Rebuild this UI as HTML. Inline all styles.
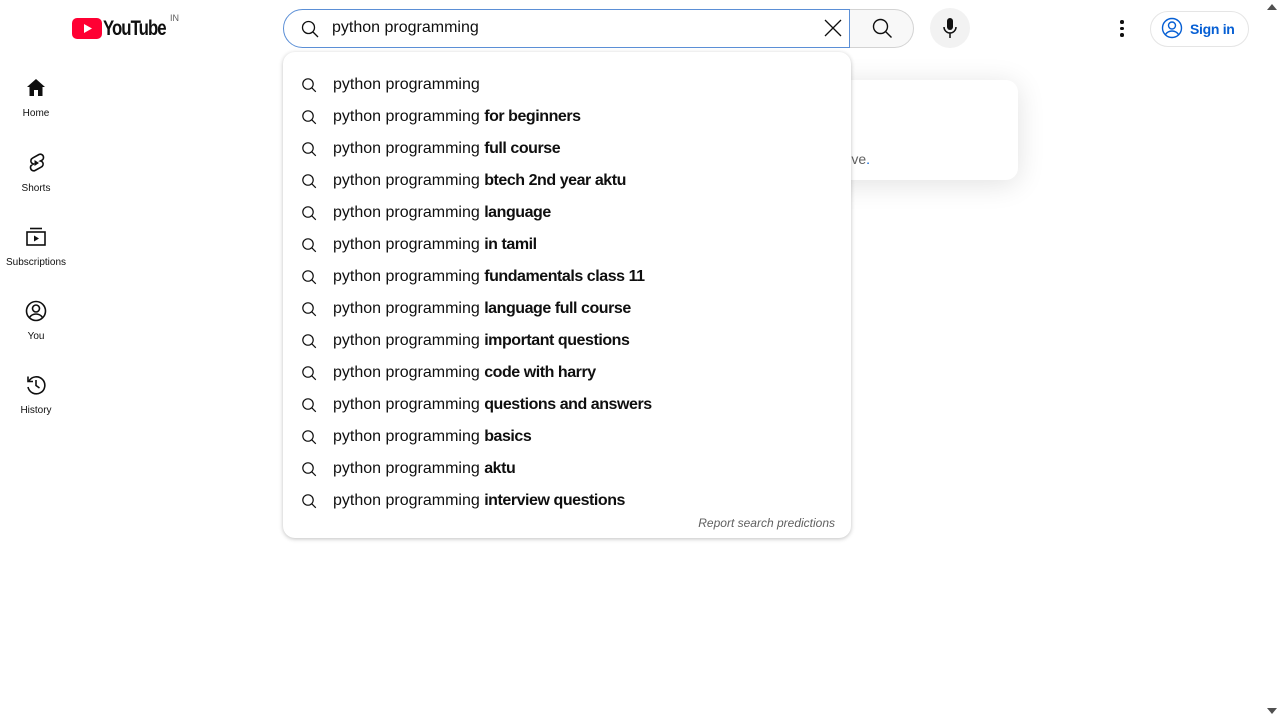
<!DOCTYPE html>
<html><head><style>
body{margin:0;width:1280px;height:720px;overflow:hidden;background:#fff;font-family:"Liberation Sans",Roboto,sans-serif;position:relative;color:#0f0f0f}
.abs{position:absolute}
.nav{position:absolute;left:0;width:72px;text-align:center;font-size:10px;color:#0f0f0f}
.nav svg{display:block;margin:0 auto 8px}
.row{position:absolute;left:0;height:32px;line-height:32px;font-size:16px;width:568px}
.row svg{position:absolute;left:18px;top:8px}
.row span{position:absolute;left:50px}
b{font-weight:bold;letter-spacing:-0.45px}
</style></head><body>
<div class="abs" style="left:72px;top:18px">
<svg width="30" height="21" viewBox="0 0 30 21"><rect width="30" height="21" rx="5" fill="#ff0033"/><path d="M12 6v9l8-4.5z" fill="#fff"/></svg></div>
<div class="abs" style="left:103px;top:17px;font-size:21px;font-weight:bold;letter-spacing:-1.2px;transform:scaleX(0.8);transform-origin:left">YouTube</div>
<div class="abs" style="left:170px;top:13px;font-size:9px;color:#606060">IN</div>
<div class="abs" style="left:283px;top:9px;width:565px;height:37px;border:1px solid #5b8fd6;border-radius:20px 0 0 20px"></div>
<svg class="abs" style="left:300px;top:19px" width="20" height="20" viewBox="0 0 20 20" fill="none" stroke="#0f0f0f" stroke-width="1.3"><circle cx="8.5" cy="8.5" r="6"/><path d="M13 13l5 5"/></svg>
<div class="abs" style="left:332px;top:19px;font-size:16px">python programming</div>
<svg class="abs" style="left:823px;top:18px" width="20" height="20" viewBox="0 0 20 20" stroke="#0f0f0f" stroke-width="1.3"><path d="M2 2l16 16M18 2L2 18"/></svg>
<div class="abs" style="left:850px;top:9px;width:63px;height:37px;background:#f8f8f8;border:1px solid #d3d3d3;border-left:none;border-radius:0 20px 20px 0"></div>
<svg class="abs" style="left:871px;top:17px" width="22" height="22" viewBox="0 0 22 22" fill="none" stroke="#0f0f0f" stroke-width="1.4"><circle cx="9.5" cy="9.5" r="7"/><path d="M14.5 14.5l6 6"/></svg>
<div class="abs" style="left:930px;top:8px;width:40px;height:40px;border-radius:50%;background:#f2f2f2"></div>
<svg class="abs" style="left:940px;top:17px" width="20" height="22" viewBox="0 0 20 22"><rect x="7" y="1" width="6" height="12" rx="3" fill="#0f0f0f"/><path d="M4 10a6 6 0 0 0 12 0M10 16v5" stroke="#0f0f0f" stroke-width="1.5" fill="none"/></svg>
<div class="abs" style="left:1120px;top:20px;width:4px">
<div style="width:3.5px;height:3.5px;border-radius:50%;background:#0f0f0f;margin-bottom:3px"></div><div style="width:3.5px;height:3.5px;border-radius:50%;background:#0f0f0f;margin-bottom:3px"></div><div style="width:3.5px;height:3.5px;border-radius:50%;background:#0f0f0f"></div></div>
<div class="abs" style="left:1150px;top:11px;width:97px;height:34px;border:1px solid #e5e5e5;border-radius:18px"></div>
<svg class="abs" style="left:1161px;top:17px" width="22" height="22" viewBox="0 0 22 22" fill="none" stroke="#065fd4" stroke-width="1.4"><circle cx="11" cy="11" r="9.5"/><circle cx="11" cy="8.5" r="3.5"/><path d="M4.5 17.5c2-3 4-3.5 6.5-3.5s4.5.5 6.5 3.5"/></svg>
<div class="abs" style="left:1190px;top:21px;font-size:14px;font-weight:bold;letter-spacing:-0.3px;color:#065fd4">Sign in</div>
<div class="abs" style="left:1267px;top:4px;width:0;height:0;border-left:5px solid transparent;border-right:5px solid transparent;border-bottom:6px solid #505050"></div>
<div class="abs" style="left:1267px;top:708px;width:0;height:0;border-left:5px solid transparent;border-right:5px solid transparent;border-top:6px solid #505050"></div>
<div class="nav" style="top:76px"><svg width="24" height="24" viewBox="0 0 24 24"><path d="M12 3l9 8h-2.5v9h-4.5v-6h-4v6H5.5v-9H3z" fill="#0f0f0f"/></svg>Home</div>
<div class="nav" style="top:151px"><svg width="24" height="24" viewBox="0 0 24 24" fill="none" stroke="#0f0f0f" stroke-width="1.6"><path d="M15 3.5c2-1 4.5.5 4.5 3 0 1.5-1 2.5-2 3l-1 .5c2 .5 3 2 2.5 4-.3 1-1 1.7-2 2.2L11 19.5c-2 1-4.5-.5-4.5-3 0-1.5 1-2.5 2-3l1-.5c-2-.5-3-2-2.5-4 .3-1 1-1.7 2-2.2z"/><path d="M10.5 9v6l4.5-3z" fill="#0f0f0f" stroke="none"/></svg>Shorts</div>
<div class="nav" style="top:225px"><svg width="24" height="24" viewBox="0 0 24 24" fill="none" stroke="#0f0f0f" stroke-width="1.6"><path d="M6 3.5h12"/><rect x="3" y="7" width="18" height="13"/><path d="M10 10.5v6l5-3z" fill="#0f0f0f" stroke="none"/></svg>Subscriptions</div>
<div class="nav" style="top:299px"><svg width="24" height="24" viewBox="0 0 24 24" fill="none" stroke="#0f0f0f" stroke-width="1.6"><circle cx="12" cy="12" r="9.5"/><circle cx="12" cy="9.5" r="3.5"/><path d="M5.5 18.5c2-3 4-3.5 6.5-3.5s4.5.5 6.5 3.5"/></svg>You</div>
<div class="nav" style="top:373px"><svg width="24" height="24" viewBox="0 0 24 24" fill="none" stroke="#0f0f0f" stroke-width="1.6"><path d="M5 8a8.5 8.5 0 1 1-1 6"/><path d="M4 3.5v5h5"/><path d="M12 7v5.5l3.5 2.5"/></svg>History</div>
<div class="abs" style="left:620px;top:80px;width:398px;height:100px;background:#fff;border-radius:12px;box-shadow:0 4px 28px rgba(0,0,0,.12)"></div>
<div class="abs" style="left:600px;top:151px;width:270px;text-align:right;font-size:14px;color:#606060">and we'll recommend videos you'll love<span style="color:#065fd4">.</span></div>
<div class="abs" style="left:283px;top:52px;width:568px;height:486px;background:#fff;border-radius:12px;box-shadow:0 1px 4px rgba(0,0,0,.25)">
<div id="rows"></div>
<div class="abs" style="right:16px;top:464px;font-size:12px;font-style:italic;color:#606060">Report search predictions</div>
</div>
<script>
var s=["","for beginners","full course","btech 2nd year aktu","language","in tamil","fundamentals class 11","language full course","important questions","code with harry","questions and answers","basics","aktu","interview questions"];
var h="";s.forEach(function(r,i){h+='<div class="row" style="top:'+(17+i*32)+'px"><svg width="16" height="16" viewBox="0 0 16 16" fill="none" stroke="#0f0f0f" stroke-width="1.2"><circle cx="7" cy="7" r="5.2"/><path d="M10.8 10.8l4 4"/></svg><span>python programming'+(r?' <b>'+r+'</b>':'')+'</span></div>'});
document.getElementById("rows").innerHTML=h;
</script>
</body></html>
